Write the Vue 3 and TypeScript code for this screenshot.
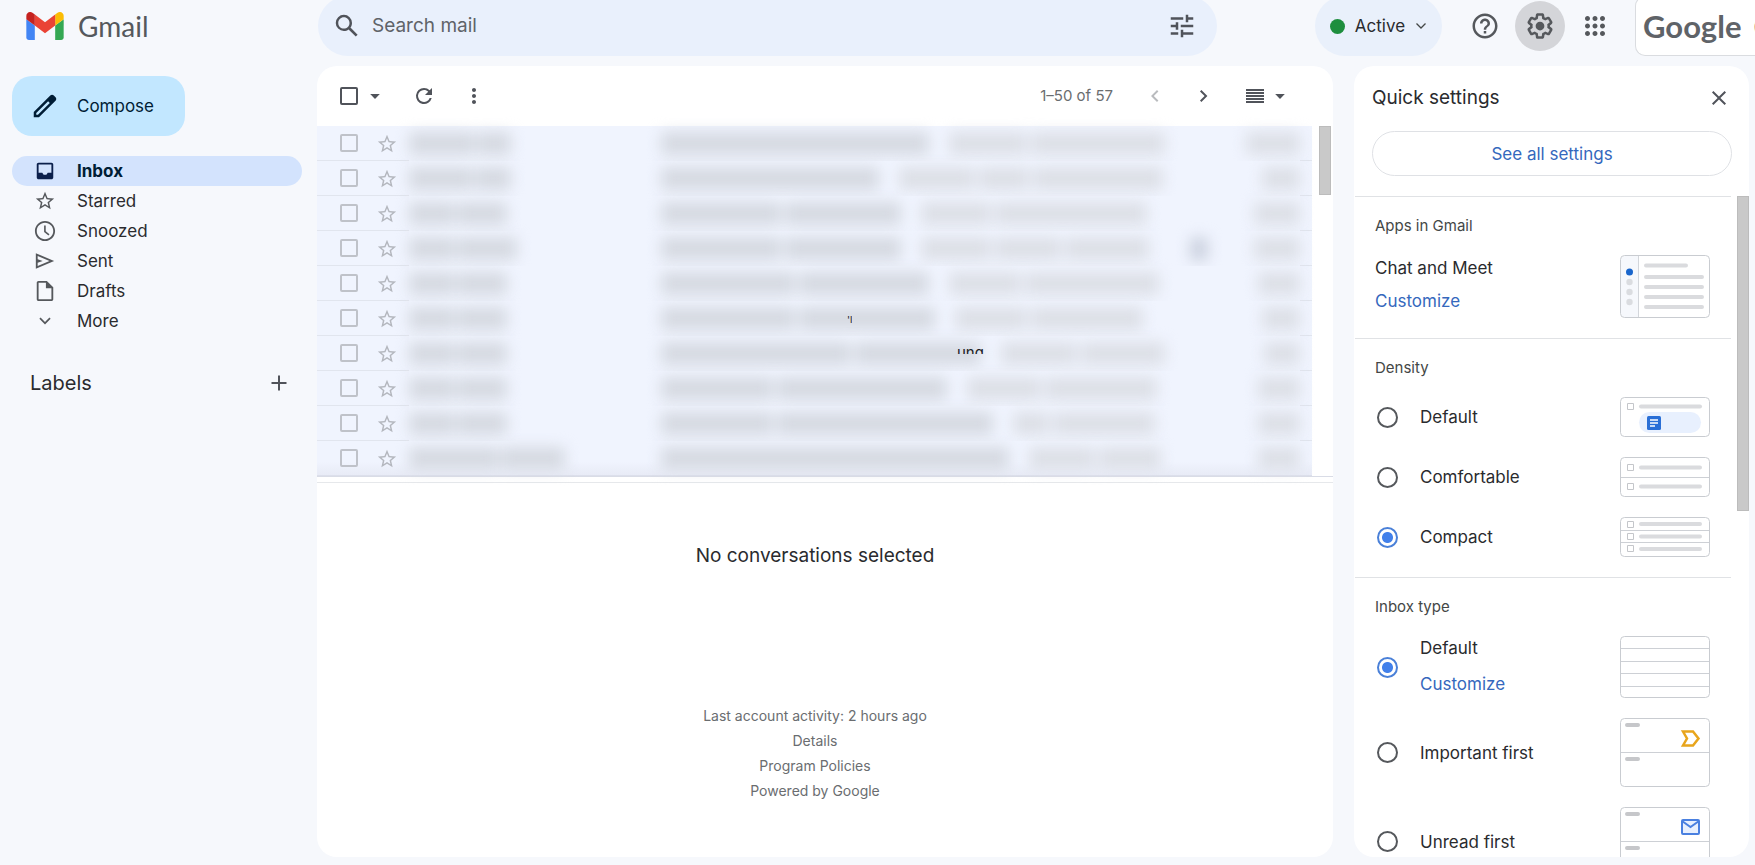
<script setup lang="ts">
import { ref } from 'vue'

interface NavItem {
  id: string
  label: string
  icon: string
}

interface MailRow {
  sender: number[]
  subject: number[]
  snippet: number[]
  date: number
  attachment?: boolean
}

const navItems: NavItem[] = [
  {
    id: 'inbox',
    label: 'Inbox',
    icon: 'M19 3H5c-1.1 0-2 .9-2 2v14c0 1.1.9 2 2 2h14c1.1 0 2-.9 2-2V5c0-1.1-.9-2-2-2zm0 11h-4l-1.500 2h-3L9 14H5V5h14v9z',
  },
  {
    id: 'starred',
    label: 'Starred',
    icon: 'M22 9.240l-7.190-.620L12 2 9.190 8.630 2 9.240l5.460 4.730L5.820 21 12 17.270 18.180 21l-1.630-7.030L22 9.240zM12 15.400l-3.760 2.270 1-4.280-3.320-2.880 4.380-.380L12 6.100l1.710 4.040 4.380.380-3.320 2.880 1 4.280L12 15.400z',
  },
  {
    id: 'snoozed',
    label: 'Snoozed',
    icon: 'M12 1C5.900 1 1 5.900 1 12s4.900 11 11 11 11-4.900 11-11S18.100 1 12 1zm0 20c-5 0-9-4-9-9s4-9 9-9 9 4 9 9-4 9-9 9zM12.800 6H11v7l4.800 4 1.100-1.500-4.100-3.300z',
  },
  {
    id: 'sent',
    label: 'Sent',
    icon: 'M2 3.500v17L22 12 2 3.500zm2 3L16.900 12 4 17.500v-3.700L9.500 12 4 10.200V6.500z',
  },
  {
    id: 'drafts',
    label: 'Drafts',
    icon: 'M14 1H5c-1.100 0-2 .9-2 2v18c0 1.100.9 2 2 2h14c1.100 0 2-.9 2-2V8l-7-7zM5 21V3h8v6h6v12H5z',
  },
  {
    id: 'more',
    label: 'More',
    icon: 'M12 16.500l-7.500-7.500 1.600-1.600 5.900 5.900 5.900-5.900 1.600 1.600z',
  },
]

const starPath = navItems[1].icon

const mails: MailRow[] = [
  { sender: [66, 34], subject: [268], snippet: [78, 134], date: 54 },
  { sender: [64, 36], subject: [218], snippet: [76, 50, 130], date: 38 },
  { sender: [46, 50], subject: [120, 116], snippet: [70, 152], date: 46 },
  { sender: [46, 60], subject: [120, 116], snippet: [70, 66, 84], date: 46, attachment: true },
  { sender: [46, 50], subject: [134, 130], snippet: [72, 134], date: 42 },
  { sender: [46, 50], subject: [134, 136], snippet: [72, 112], date: 38 },
  { sender: [46, 50], subject: [190, 126], snippet: [76, 84], date: 36 },
  { sender: [46, 50], subject: [112, 170], snippet: [74, 112], date: 42 },
  { sender: [46, 50], subject: [112, 216], snippet: [36, 102], date: 42 },
  { sender: [90, 64], subject: [348], snippet: [66, 62], date: 42 },
]

const density = ref('compact')
const inboxType = ref('default')
const search = ref('')
</script>

<template>
  <div class="page">
    <header class="topbar">
      <a class="brand" href="#" aria-label="Gmail">
        <svg class="brand-mark" viewBox="52 42 88 66" aria-hidden="true">
          <path fill="#4285f4" d="M58 108h14V74L52 59v43c0 3.320 2.690 6 6 6" />
          <path fill="#34a853" d="M120 108h14c3.320 0 6-2.690 6-6V59l-20 15" />
          <path fill="#fbbc04" d="M120 48v26l20-15v-8c0-7.420-8.470-11.650-14.400-7.200" />
          <path fill="#ea4335" d="M72 74V48l24 18 24-18v26L96 92" />
          <path fill="#c5221f" d="M52 51v8l20 15V48l-5.600-4.200c-5.940-4.450-14.400-.220-14.400 7.200" />
        </svg>
        <span>Gmail</span>
      </a>
      <form class="search" role="search" @submit.prevent>
        <button type="submit" class="icon-btn" aria-label="Search">
          <svg class="i30" viewBox="0 0 24 24"><path d="M20.490 19l-5.730-5.730C15.530 12.200 16 10.910 16 9.500A6.500 6.500 0 1 0 9.500 16c1.410 0 2.700-.470 3.770-1.240L19 20.490 20.490 19zM5 9.500C5 7.010 7.010 5 9.500 5S14 7.010 14 9.500 11.990 14 9.500 14 5 11.990 5 9.500z" /></svg>
        </button>
        <input v-model="search" type="text" placeholder="Search mail" aria-label="Search mail" />
        <button type="button" class="icon-btn" aria-label="Show search options">
          <svg class="i30" viewBox="0 0 24 24"><path d="M3 17v2h6v-2H3zM3 5v2h10V5H3zm10 16v-2h8v-2h-8v-2h-2v6h2zM7 9v2H3v2h4v2h2V9H7zm14 4v-2H11v2h10zm-6-4h2V7h4V5h-4V3h-2v6z" /></svg>
        </button>
      </form>
      <div class="tools">
        <button type="button" class="status">
          <span class="dot"></span>
          <span>Active</span>
          <svg class="chev" viewBox="0 0 12 12"><path d="M1.500 3.500L6 8l4.500-4.500" fill="none" stroke="#444746" stroke-width="1.300" /></svg>
        </button>
        <button type="button" class="round" aria-label="Support">
          <svg class="i30" viewBox="0 0 24 24"><path d="M11 18h2v-2h-2v2zm1-16C6.480 2 2 6.480 2 12s4.480 10 10 10 10-4.480 10-10S17.520 2 12 2zm0 18c-4.410 0-8-3.590-8-8s3.590-8 8-8 8 3.590 8 8-3.590 8-8 8zm0-14c-2.210 0-4 1.790-4 4h2c0-1.100.9-2 2-2s2 .9 2 2c0 2-3 1.750-3 5h2c0-2.250 3-2.500 3-5 0-2.210-1.790-4-4-4z" /></svg>
        </button>
        <button type="button" class="round on" aria-label="Settings">
          <svg class="i30" viewBox="0 0 24 24">
            <path d="M13.850 22.250h-3.700c-.740 0-1.360-.540-1.450-1.270l-.270-1.890c-.270-.140-.530-.290-.790-.460l-1.800.720c-.7.260-1.470-.030-1.810-.650L2.200 15.530c-.350-.660-.2-1.440.360-1.880l1.530-1.190c-.010-.150-.020-.3-.020-.460 0-.150.010-.310.020-.460l-1.520-1.190c-.590-.450-.740-1.260-.370-1.880l1.850-3.190c.340-.620 1.110-.9 1.790-.630l1.810.730c.260-.170.520-.320.780-.460l.270-1.910c.090-.7.710-1.250 1.440-1.250h3.700c.740 0 1.360.540 1.450 1.270l.270 1.890c.270.140.530.290.790.460l1.800-.720c.710-.260 1.480.030 1.820.650l1.840 3.180c.360.660.2 1.440-.360 1.880l-1.520 1.190c.010.150.020.3.020.460s-.010.310-.020.460l1.520 1.190c.560.450.720 1.230.370 1.860l-1.860 3.220c-.340.620-1.110.9-1.800.630l-1.800-.720c-.260.170-.520.320-.780.460l-.270 1.910c-.1.680-.720 1.220-1.460 1.220zm-3.230-2h2.760l.370-2.550.530-.220c.440-.180.880-.440 1.340-.780l.450-.340 2.380.960 1.380-2.400-2.030-1.580.070-.560c.030-.260.060-.510.060-.780s-.030-.530-.060-.780l-.070-.560 2.030-1.580-1.390-2.400-2.390.960-.450-.350c-.420-.320-.870-.580-1.330-.770l-.520-.220-.370-2.550h-2.760l-.370 2.550-.530.210c-.440.190-.880.440-1.340.790l-.450.330-2.380-.950-1.390 2.390 2.030 1.580-.070.560a7 7 0 0 0-.060.790c0 .260.020.530.060.780l.070.560-2.030 1.580 1.380 2.400 2.390-.960.450.350c.430.330.860.580 1.330.770l.530.220.380 2.550z" />
            <circle cx="12" cy="12" r="3.500" />
          </svg>
        </button>
        <button type="button" class="round" aria-label="Google apps">
          <svg class="i30" viewBox="0 0 24 24"><path d="M6 8c1.100 0 2-.9 2-2s-.9-2-2-2-2 .9-2 2 .9 2 2 2zm6 12c1.100 0 2-.9 2-2s-.9-2-2-2-2 .9-2 2 .9 2 2 2zm-6 0c1.100 0 2-.9 2-2s-.9-2-2-2-2 .9-2 2 .9 2 2 2zm0-6c1.100 0 2-.9 2-2s-.9-2-2-2-2 .9-2 2 .9 2 2 2zm6 0c1.100 0 2-.9 2-2s-.9-2-2-2-2 .9-2 2 .9 2 2 2zm4-8c0 1.100.9 2 2 2s2-.9 2-2-.9-2-2-2-2 .9-2 2zm-4 2c1.100 0 2-.9 2-2s-.9-2-2-2-2 .9-2 2 .9 2 2 2zm6 6c1.100 0 2-.9 2-2s-.9-2-2-2-2 .9-2 2 .9 2 2 2zm0 6c1.100 0 2-.9 2-2s-.9-2-2-2-2 .9-2 2 .9 2 2 2z" /></svg>
        </button>
        <a class="org" href="#"><span>Google</span><span>C</span></a>
      </div>
    </header>

    <div class="body">
      <aside class="side">
        <button type="button" class="compose">
          <svg class="i30" viewBox="0 0 24 24"><path d="M20.410 4.940l-1.350-1.350c-.780-.780-2.050-.780-2.830 0L3 16.820V21h4.180L20.410 7.770c.790-.780.790-2.050 0-2.830zM6.350 19H5v-1.350l9.500-9.500 1.350 1.350L6.350 19z" /></svg>
          <span>Compose</span>
        </button>
        <nav>
          <a v-for="item in navItems" :key="item.id" href="#" class="nav" :class="{ current: item.id === 'inbox' }">
            <svg :class="['nav-icon', item.id]" viewBox="0 0 24 24"><path :d="item.icon" /></svg>
            <span>{{ item.label }}</span>
          </a>
        </nav>
        <div class="labels">
          <h2>Labels</h2>
          <button type="button" class="icon-btn" aria-label="Create new label">
            <svg class="i24" viewBox="0 0 24 24"><path d="M19.500 13h-6.500v6.500h-2V13H4.500v-2H11V4.500h2V11h6.500z" /></svg>
          </button>
        </div>
      </aside>

      <main class="mail">
        <div class="toolbar">
          <input type="checkbox" class="check dark" aria-label="Select all" />
          <button type="button" class="icon-btn arrow" aria-label="Select options"><svg class="i24" viewBox="0 0 24 24"><path d="M7.200 10h9.600L12 15z" /></svg></button>
          <button type="button" class="icon-btn refresh" aria-label="Refresh"><svg class="i24" viewBox="0 0 24 24"><path d="M17.650 6.350A7.958 7.958 0 0 0 12 4a8 8 0 1 0 7.730 10h-2.080A6 6 0 1 1 12 6c1.660 0 3.140.690 4.220 1.780L13 11h7V4l-2.350 2.350z" /></svg></button>
          <button type="button" class="icon-btn" aria-label="More options"><svg class="i24" viewBox="0 0 24 24"><path d="M12 8c1.100 0 2-.9 2-2s-.9-2-2-2-2 .9-2 2 .9 2 2 2zm0 2c-1.100 0-2 .9-2 2s.9 2 2 2 2-.9 2-2-.9-2-2-2zm0 6c-1.100 0-2 .9-2 2s.9 2 2 2 2-.9 2-2-.9-2-2-2z" /></svg></button>
          <div class="pager">
            <span class="count">1–50 of 57</span>
            <button type="button" class="icon-btn" aria-label="Newer" disabled><svg class="i24" viewBox="0 0 24 24"><path d="M15.400 7.400L14 6l-6 6 6 6 1.400-1.400L10.800 12z" /></svg></button>
            <button type="button" class="icon-btn older" aria-label="Older"><svg class="i24" viewBox="0 0 24 24"><path d="M9.400 6L8 7.400l4.600 4.600L8 16.600 9.400 18l6-6z" /></svg></button>
            <button type="button" class="icon-btn split" aria-label="Toggle split pane mode">
              <svg class="lines" viewBox="0 0 18 14"><path d="M0 0h18v2H0zM0 3h18v2H0zM0 6h18v2H0zM0 9h18v2H0zM0 12h18v2H0z" /></svg>
              <svg class="i24" viewBox="0 0 24 24"><path d="M7.200 10h9.600L12 15z" /></svg>
            </button>
          </div>
        </div>

        <div class="pane">
          <ul class="rows">
            <li v-for="(mail, i) in mails" :key="i" class="row">
              <input type="checkbox" class="check" :aria-label="`Select conversation ${i + 1}`" />
              <button type="button" class="icon-btn star" :aria-label="`Star conversation ${i + 1}`"><svg class="i22" viewBox="0 0 24 24"><path :d="starPath" /></svg></button>
              <div class="veil">
                <div class="words sender"><span v-for="(w, k) in mail.sender" :key="k" class="smear" :style="{ width: w + 'px' }"></span></div>
                <div class="words subject">
                  <span v-for="(w, k) in mail.subject" :key="k" class="smear" :style="{ width: w + 'px' }"></span>
                  <span class="split-gap"></span>
                  <span v-for="(w, k) in mail.snippet" :key="'s' + k" class="smear pale" :style="{ width: w + 'px' }"></span>
                </div>
                <div class="words clip"><span v-if="mail.attachment" class="smear blob"></span></div>
                <div class="words date"><span class="smear pale" :style="{ width: mail.date + 'px' }"></span></div>
              </div>
              <span v-if="i === 5" class="scrap scrap-a">'l</span>
              <span v-if="i === 6" class="scrap scrap-b">ung</span>
            </li>
          </ul>
          <div class="track"><div class="thumb"></div></div>
        </div>

        <section class="reading">
          <p class="empty">No conversations selected</p>
          <footer>
            <span>Last account activity: 2 hours ago</span>
            <a href="#">Details</a>
            <a href="#">Program Policies</a>
            <a href="#">Powered by Google</a>
          </footer>
        </section>
      </main>

      <aside class="settings">
        <div class="settings-head">
          <h2>Quick settings</h2>
          <button type="button" class="icon-btn" aria-label="Close"><svg class="i24" viewBox="0 0 24 24"><path d="M19 6.400L17.600 5 12 10.600 6.400 5 5 6.400l5.600 5.600L5 17.600 6.400 19l5.600-5.600 5.600 5.600 1.400-1.400-5.600-5.600z" /></svg></button>
        </div>
        <button type="button" class="all">See all settings</button>

        <div class="scroller">
          <div class="sections">
            <section>
              <h3>Apps in Gmail</h3>
              <div class="option">
                <div class="stack">
                  <span>Chat and Meet</span>
                  <a href="#">Customize</a>
                </div>
                <svg class="preview" width="90" height="63" viewBox="0 0 90 63">
                  <path d="M1 5a4 4 0 0 1 4-4h13v61H5a4 4 0 0 1-4-4z" fill="#f6f8fc" />
                  <path d="M18.500 1v61" stroke="#d3d6db" />
                  <rect x=".5" y=".5" width="89" height="62" rx="4" class="frame" />
                  <circle cx="9.500" cy="17" r="3.500" fill="#1a66cc" />
                  <g fill="#dadce0"><circle cx="9.500" cy="27" r="3.200" /><circle cx="9.500" cy="37" r="3.200" /><circle cx="9.500" cy="47" r="3.200" /></g>
                  <path class="bar" d="M26 10.500h40M26 22h56M26 32h56M26 42h56M26 52h56" />
                </svg>
              </div>
            </section>

            <section role="radiogroup" aria-label="Density">
              <h3>Density</h3>
              <label class="option">
                <input v-model="density" type="radio" name="density" value="default" />
                <span>Default</span>
                <svg class="preview" width="90" height="40" viewBox="0 0 90 40">
                  <rect x=".5" y=".5" width="89" height="39" rx="4" class="frame" />
                  <path class="box" d="M7.500 6.500h6v6h-6z" />
                  <path class="bar" d="M21 9.500h59" />
                  <rect x="19" y="15" width="62" height="21" rx="10.500" fill="#e8f0fe" />
                  <rect x="27" y="19" width="14" height="14" rx="1.500" fill="#2a6fd6" />
                  <path d="M30 23h8M30 26h8M30 29h5" stroke="#fff" stroke-width="1.500" />
                </svg>
              </label>
              <label class="option">
                <input v-model="density" type="radio" name="density" value="comfortable" />
                <span>Comfortable</span>
                <svg class="preview" width="90" height="40" viewBox="0 0 90 40">
                  <rect x=".5" y=".5" width="89" height="39" rx="4" class="frame" />
                  <path class="rule" d="M1 20.500h88" />
                  <path class="box" d="M7.500 7.500h6v6h-6zM7.500 26.500h6v6h-6z" />
                  <path class="bar" d="M21 10.500h59M21 29.500h59" />
                </svg>
              </label>
              <label class="option">
                <input v-model="density" type="radio" name="density" value="compact" />
                <span>Compact</span>
                <svg class="preview" width="90" height="40" viewBox="0 0 90 40">
                  <rect x=".5" y=".5" width="89" height="39" rx="4" class="frame" />
                  <path class="rule" d="M1 13.500h88M1 25.500h88" />
                  <path class="box" d="M7.500 4.500h6v6h-6zM7.500 16.500h6v6h-6zM7.500 28.500h6v6h-6z" />
                  <path class="bar" d="M21 7h59M21 19.500h59M21 32h59" />
                </svg>
              </label>
            </section>

            <section role="radiogroup" aria-label="Inbox type">
              <h3>Inbox type</h3>
              <div class="option">
                <input id="type-default" v-model="inboxType" type="radio" name="inbox-type" value="default" />
                <div class="stack wide">
                  <label for="type-default">Default</label>
                  <a href="#">Customize</a>
                </div>
                <svg class="preview" width="90" height="62" viewBox="0 0 90 62">
                  <rect x=".5" y=".5" width="89" height="61" rx="4" class="frame" />
                  <path class="rule" d="M1 12.500h88M1 25.500h88M1 37.500h88M1 50.500h88" />
                </svg>
              </div>
              <label class="option">
                <input v-model="inboxType" type="radio" name="inbox-type" value="important" />
                <span>Important first</span>
                <svg class="preview" width="90" height="69" viewBox="0 0 90 69">
                  <rect x=".5" y=".5" width="89" height="68" rx="4" class="frame" />
                  <path class="rule" d="M1 34.500h88" />
                  <path class="tag" d="M7 7h11M7 41h11" />
                  <path d="M63 13.500h10l5.500 7-5.500 7H63l4-7z" fill="none" stroke="#e8a51c" stroke-width="2.500" />
                </svg>
              </label>
              <label class="option">
                <input v-model="inboxType" type="radio" name="inbox-type" value="unread" />
                <span>Unread first</span>
                <svg class="preview" width="90" height="69" viewBox="0 0 90 69">
                  <rect x=".5" y=".5" width="89" height="68" rx="4" class="frame" />
                  <path class="rule" d="M1 34.500h88" />
                  <path class="tag" d="M7 7h11M7 41h11" />
                  <rect x="62" y="13" width="17" height="14" rx="1" fill="#e8f0fe" stroke="#4a80e0" stroke-width="2" />
                  <path d="M62 14l8.500 6 8.500-6" fill="none" stroke="#4a80e0" stroke-width="2" />
                </svg>
              </label>
            </section>
          </div>
          <div class="track"><div class="thumb long"></div></div>
        </div>
      </aside>
    </div>
  </div>
</template>

<style>
body {
  margin: 0;
  background: #f6f8fc;
}
</style>

<style scoped>
* {
  box-sizing: border-box;
}

.page {
  height: 100vh;
  overflow: hidden;
  display: flex;
  flex-direction: column;
  gap: 10px;
  padding-bottom: 8px;
  background: #f6f8fc;
  color: #2a2b2e;
  font-family: Inter, Roboto, 'Liberation Sans', sans-serif;
  font-size: 17px;
  line-height: 24px;
}

button,
input {
  font: inherit;
  color: inherit;
}

button {
  border: 0;
  padding: 0;
  background: none;
  cursor: pointer;
}

a {
  color: inherit;
  text-decoration: none;
}

h2,
h3,
p,
ul {
  margin: 0;
  padding: 0;
  font-weight: 400;
  list-style: none;
}

svg {
  display: block;
  flex: none;
  fill: currentColor;
}

.i30 { width: 30px; height: 30px; }
.i24 { width: 24px; height: 24px; }
.i22 { width: 22px; height: 22px; }

.icon-btn {
  display: flex;
  align-items: center;
  justify-content: center;
  color: #50535a;
}

/* Top bar */
.topbar {
  flex: none;
  display: flex;
  align-items: center;
  height: 60px;
  margin-top: -4px;
}

.brand {
  flex: 0 0 318px;
  display: flex;
  align-items: center;
  gap: 14px;
  padding-left: 26px;
  color: #55585c;
  font-family: Lato, sans-serif;
  font-size: 28px;
}

.brand-mark {
  width: 38px;
  height: 28px;
}

.search {
  flex: 1;
  min-width: 0;
  height: 60px;
  display: flex;
  align-items: center;
  gap: 10px;
  padding: 0 20px 0 14px;
  border-radius: 30px;
  background: #e9f0fc;
}

.search input {
  flex: 1;
  min-width: 0;
  border: 0;
  padding: 0;
  outline: 0;
  background: none;
  font-size: 19px;
}

.search input::placeholder {
  color: #5f6368;
  opacity: 1;
}

.tools {
  flex: 0 0 538px;
  min-width: 0;
  height: 60px;
  display: flex;
  align-items: center;
  padding-left: 98px;
}

.status {
  flex: none;
  width: 127px;
  height: 60px;
  margin-right: 18px;
  display: flex;
  align-items: center;
  justify-content: center;
  gap: 10px;
  border-radius: 30px;
  background: #e9f0fb;
  font-size: 17px;
}

.dot {
  width: 15px;
  height: 15px;
  border-radius: 50%;
  background: #1e8e3e;
}

.chev {
  width: 12px;
  height: 12px;
}

.round {
  flex: none;
  width: 50px;
  height: 50px;
  margin-right: 5px;
  display: flex;
  align-items: center;
  justify-content: center;
  border-radius: 50%;
  color: #55585c;
}

.round.on {
  background: #d4d5d9;
}

.org {
  flex: 1;
  min-width: 0;
  height: 60px;
  margin-left: 10px;
  padding-left: 7px;
  display: flex;
  align-items: center;
  gap: 12px;
  overflow: hidden;
  border: 1px solid #dadce0;
  border-right: 0;
  border-radius: 10px 0 0 10px;
  background: #fff;
  color: #5f6368;
  font-family: Lato, sans-serif;
  font-size: 31px;
  font-weight: 700;
}

/* Columns */
.body {
  flex: 1;
  min-height: 0;
  display: grid;
  grid-template-columns: 317px minmax(0, 1fr) 395px;
  padding-right: 6px;
}

.side {
  padding: 10px 15px 0 12px;
}

.compose {
  width: 173px;
  height: 60px;
  margin-bottom: 20px;
  padding-left: 18px;
  display: flex;
  align-items: center;
  gap: 17px;
  border-radius: 20px;
  background: #c2e7ff;
  color: #001d35;
}

.nav {
  height: 30px;
  display: flex;
  align-items: center;
  gap: 21px;
  padding-left: 22px;
  border-radius: 15px;
}

.nav-icon {
  width: 22px;
  height: 22px;
  color: #55585c;
}

.nav.current {
  background: #d3e3fd;
  font-weight: 700;
  color: #001d35;
}

.nav.current .nav-icon {
  color: #0b1f4b;
}

.nav-icon.more {
  padding: 2px;
}

.labels {
  display: flex;
  align-items: center;
  justify-content: space-between;
  padding: 35px 11px 0 18px;
}

.labels h2 {
  font-size: 20px;
}

/* Mail list */
.mail {
  display: flex;
  flex-direction: column;
  margin-right: 21px;
  border-radius: 20px;
  background: #fff;
  overflow: hidden;
}

.toolbar {
  flex: none;
  height: 60px;
  display: flex;
  align-items: center;
  padding: 0 41px 0 23px;
}

.check {
  appearance: none;
  flex: none;
  width: 18px;
  height: 18px;
  margin: 0;
  border: 2px solid #bfc2c9;
  border-radius: 2px;
}

.check.dark {
  border-color: #50535a;
}

.arrow {
  margin: 0 25px 0 5px;
}

.refresh {
  margin-right: 26px;
}

.pager {
  margin-left: auto;
  display: flex;
  align-items: center;
}

.count {
  margin-right: 30px;
  font-size: 15px;
  color: #6a6d70;
}

.icon-btn:disabled {
  color: #b9bbbe;
}

.older {
  margin: 0 30px 0 25px;
}

.split {
  gap: 4px;
}

.lines {
  width: 18px;
  height: 14px;
}

.pane {
  flex: none;
  display: flex;
  justify-content: space-between;
  border-bottom: 1px solid #d9dce6;
}

.rows {
  flex: 1;
  min-width: 0;
  margin-right: 7px;
  background: #f0f4fe;
}

.row {
  position: relative;
  height: 35px;
  display: flex;
  align-items: center;
  padding-left: 23px;
  border-bottom: 1px solid #e1e5ee;
}

.row:last-child {
  border-bottom-color: #dcdfeb;
  background: linear-gradient(#f0f4fe 60%, #e8ebf6);
}

.star {
  margin: 2px 11px 0 18px;
  color: #b4b7be;
}

/* Covers the row divider behind the smeared text */
.veil {
  flex: 1;
  align-self: stretch;
  display: flex;
  align-items: center;
  min-width: 0;
  margin: 0 12px -1px 0;
  background: #f0f4fe;
}

.row:last-child .veil {
  background: none;
}

.words {
  display: flex;
  align-items: center;
  gap: 2px;
  filter: blur(7px);
}

.sender { flex: 0 0 252px; }
.subject { flex: 1; min-width: 0; gap: 4px; }
.split-gap { width: 12px; }
.clip { flex: 0 0 50px; }
.date { flex: 0 0 60px; justify-content: flex-end; }

.smear {
  flex: none;
  height: 23px;
  border-radius: 4px;
  background: #d6dae2;
}

.smear.pale {
  background: #dde0e7;
}

.smear.blob {
  width: 18px;
  height: 24px;
  background: #cdd3e0;
}

/* Slivers of letters left uncovered */
.scrap {
  position: absolute;
  overflow: hidden;
  height: 5px;
  line-height: 7px;
  font-size: 15px;
  color: #202124;
}

.scrap-a {
  left: 530px;
  top: 14px;
  height: 8px;
  line-height: 10px;
  font-size: 10px;
}

.scrap-b {
  left: 640px;
  top: 13px;
}

.track {
  flex: 0 0 14px;
}

.thumb {
  width: 12px;
  height: 69px;
  background: #c9c9c9;
  border: 1px solid #bcbcbc;
}

.thumb.long {
  height: 315px;
}

.reading {
  flex: 1;
  display: flex;
  flex-direction: column;
  align-items: center;
  margin-top: 5px;
  padding: 61px 20px 0 0;
  border-top: 1px solid #e6e8eb;
}

.empty {
  font-size: 19px;
}

.reading footer {
  margin-top: 135px;
  display: flex;
  flex-direction: column;
  align-items: center;
  font-size: 14px;
  line-height: 25px;
  color: #6a6d70;
}

/* Quick settings */
.settings {
  display: flex;
  flex-direction: column;
  min-height: 0;
  border-radius: 20px;
  background: #fff;
  overflow: hidden;
}

.settings-head {
  flex: none;
  display: flex;
  align-items: center;
  justify-content: space-between;
  padding: 20px 18px 21px 18px;
}

.settings-head h2 {
  font-size: 19px;
}

.all {
  flex: none;
  height: 45px;
  margin: 0 17px 20px 18px;
  border: 1px solid #dfe1e5;
  border-radius: 23px;
  color: #3568bd;
}

.scroller {
  flex: 1;
  min-height: 0;
  display: flex;
  justify-content: space-between;
  overflow: hidden;
}

.scroller .track {
  flex-basis: 12px;
}

.sections {
  flex: 1;
  margin: 0 6px 0 1px;
}

.sections section {
  display: flex;
  flex-direction: column;
  gap: 20px;
  padding: 19px 21px 20px 20px;
  border-top: 1px solid #e0e2e5;
}

h3 {
  margin-bottom: -1px;
  font-size: 15px;
  line-height: 20px;
  color: #444746;
}

.option {
  display: flex;
  align-items: center;
}

.option > input {
  appearance: none;
  flex: none;
  width: 21px;
  height: 21px;
  margin: 0 22px 0 2px;
  border: 2px solid #55585c;
  border-radius: 50%;
}

.option > input:checked {
  border-color: #4a80d8;
  background: radial-gradient(circle, #4280ea 5px, #fff 6px);
}

.stack {
  display: flex;
  flex-direction: column;
  gap: 9px;
  margin-bottom: 4px;
}

.stack.wide {
  gap: 12px;
  margin-bottom: 2px;
}

.stack a {
  color: #3568bd;
}

.preview {
  margin-left: auto;
}

.frame {
  fill: none;
  stroke: #c9ccd1;
}

.rule {
  fill: none;
  stroke: #cdd0d5;
}

.box {
  fill: none;
  stroke: #c4c6ca;
}

.bar {
  fill: none;
  stroke: #dadbde;
  stroke-width: 4;
  stroke-linecap: round;
}

.tag {
  fill: none;
  stroke: #c6c7ca;
  stroke-width: 4;
  stroke-linecap: round;
}
</style>
